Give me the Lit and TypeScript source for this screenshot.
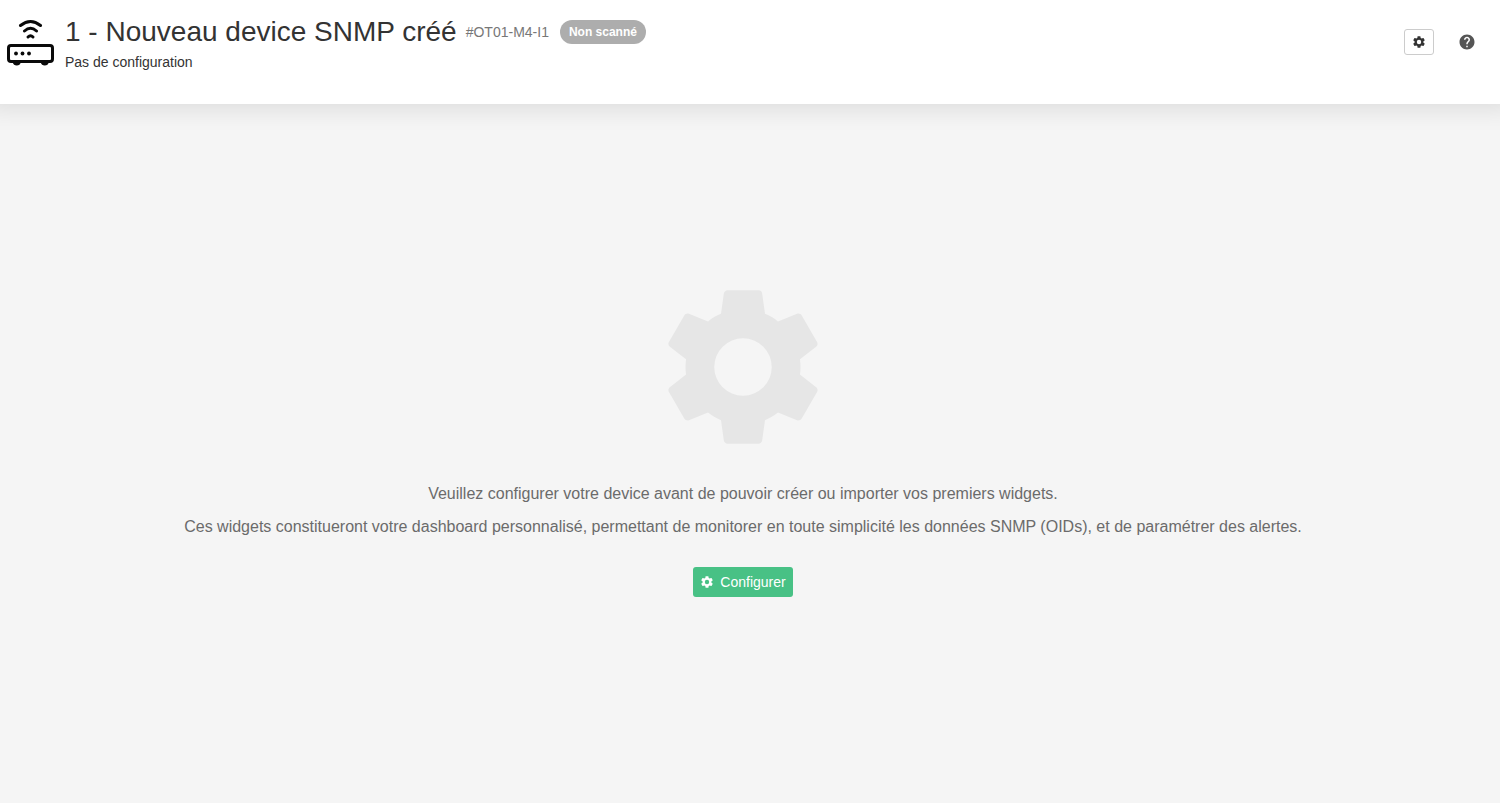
import { LitElement, css, html, svg } from "lit";
import { customElement, property } from "lit/decorators.js";

@customElement("gear-icon")
class GearIcon extends LitElement {
  static styles = css`
    :host { display: block; flex: none; }
    .glyph { display: block; width: 100%; height: 100%; fill: currentColor; }
  `;

  render() {
    return html`<svg class="glyph" viewBox="0 0 24 24" aria-hidden="true">
      <path d="M12 15.75a3.75 3.75 0 1 1 0-7.5a3.75 3.75 0 0 1 0 7.5m7.43-2.78c.04-.32.07-.64.07-.97s-.03-.66-.07-1l2.11-1.63c.19-.15.24-.42.12-.64l-2-3.46c-.12-.22-.39-.31-.61-.22l-2.49 1c-.52-.39-1.06-.73-1.69-.98l-.37-2.65A.506.506 0 0 0 14 2h-4c-.25 0-.46.18-.5.42l-.37 2.65c-.63.25-1.17.59-1.69.98l-2.49-1c-.22-.09-.49 0-.61.22l-2 3.46c-.13.22-.07.49.12.64L4.57 11c-.04.34-.07.67-.07 1s.03.65.07.97l-2.11 1.66c-.19.15-.25.42-.12.64l2 3.46c.12.22.39.3.61.22l2.49-1.01c.52.4 1.06.74 1.69.99l.37 2.65c.04.24.25.42.5.42h4c.25 0 .46-.18.5-.42l.37-2.65c.63-.26 1.17-.59 1.69-.99l2.49 1.01c.22.08.49 0 .61-.22l2-3.46c.12-.22.07-.49-.12-.64z"/>
    </svg>`;
  }
}

@customElement("device-header")
class DeviceHeader extends LitElement {
  @property() name = "";
  @property() reference = "";
  @property() status = "";
  @property() detail = "";

  static styles = css`
    :host {
      display: flex;
      align-items: flex-start;
      box-sizing: border-box;
      min-height: 104px;
      padding: 16px 24px 16px 6px;
      background: #fff;
      box-shadow: 0 -10px 24px 14px rgba(0, 0, 0, 0.11);
      color: #333;
    }
    .device { flex: none; width: 49px; height: 52px; margin-right: 10px; }
    .titles { flex: 1; min-width: 0; }
    .heading { display: flex; flex-wrap: wrap; align-items: center; min-height: 32px; }
    .name { margin: 0; font-size: 28px; line-height: 32px; font-weight: 400; }
    .reference { margin-left: 9px; font-size: 14px; line-height: 20px; color: #777; }
    .status {
      margin-left: 11px;
      padding: 0 9px;
      border-radius: 12px;
      background: #adadad;
      color: #fff;
      font-size: 12px;
      font-weight: 700;
      line-height: 24px;
    }
    .detail { margin: 4px 0 0; font-size: 14px; line-height: 20px; }
    .actions { display: flex; align-items: center; gap: 24px; padding-top: 13px; }
    .action {
      display: grid;
      place-items: center;
      box-sizing: border-box;
      width: 30px;
      height: 26px;
      padding: 0;
      border: 1px solid #ccc;
      border-radius: 3px;
      background: #fff;
      color: #333;
      cursor: pointer;
    }
    .gear { width: 14px; height: 14px; }
    .help { display: block; padding: 0; border: 0; background: none; color: #555; cursor: pointer; }
    .mark { display: block; width: 18px; height: 18px; fill: currentColor; }
  `;

  private deviceIcon() {
    return html`<svg class="device" viewBox="0 0 49 52" aria-hidden="true" fill="none" stroke="#0a0a0a">
      ${svg`
        <path stroke-width="3" stroke-linecap="round" d="M14.500 9.500Q24.500 1.500 34.500 9.500M18.500 15Q24.500 9.500 30.500 15"/>
        <path stroke-width="3" stroke-linecap="round" d="M22 21Q24.500 18.500 27 21"/>
        <rect x="2.500" y="29.500" width="44" height="16" rx="2.500" stroke-width="3"/>
        <g fill="#0a0a0a" stroke="none">
          <circle cx="10" cy="37.500" r="1.900"/><circle cx="16.500" cy="37.500" r="1.900"/><circle cx="23" cy="37.500" r="1.900"/>
          <path d="M6.500 46h8.500q-1 3.500-4.250 3.500T6.500 46M34.500 46h8.500q-1 3.500-4.250 3.500T34.500 46"/>
        </g>`}
    </svg>`;
  }

  render() {
    return html`
      ${this.deviceIcon()}
      <div class="titles">
        <div class="heading">
          <h1 class="name">${this.name}</h1>
          <span class="reference">${this.reference}</span>
          <span class="status">${this.status}</span>
        </div>
        <p class="detail">${this.detail}</p>
      </div>
      <div class="actions">
        <button class="action" type="button" aria-label="Paramètres"><gear-icon class="gear"></gear-icon></button>
        <button class="help" type="button" aria-label="Aide">
          <svg class="mark" viewBox="0 0 24 24" aria-hidden="true"><path d="M12 2C6.480 2 2 6.480 2 12s4.480 10 10 10 10-4.480 10-10S17.520 2 12 2zm1 17h-2v-2h2v2zm2.070-7.750l-.9.920C13.450 12.900 13 13.500 13 15h-2v-.5c0-1.100.45-2.100 1.170-2.830l1.240-1.260c.37-.36.59-.86.59-1.410 0-1.100-.9-2-2-2s-2 .9-2 2H8c0-2.210 1.790-4 4-4s4 1.790 4 4c0 .88-.36 1.680-.93 2.250z"/></svg>
        </button>
      </div>
    `;
  }
}

@customElement("app-root")
class AppRoot extends LitElement {
  static styles = css`
    :host {
      display: flex;
      flex-direction: column;
      min-height: 100vh;
      background: #f5f5f5;
      font-family: "Liberation Sans", Arial, sans-serif;
    }
    .empty {
      display: flex;
      flex-direction: column;
      align-items: center;
      padding: 171px 14px 32px 0;
      color: #6b6b6b;
      text-align: center;
    }
    .emblem { width: 184px; height: 184px; margin-bottom: 24px; color: #e6e6e6; }
    .message { margin: 0 0 11px; font-size: 16px; line-height: 22px; }
    .configure {
      display: flex;
      align-items: center;
      gap: 6px;
      height: 30px;
      margin-top: 18px;
      padding: 0 7px;
      border: 0;
      border-radius: 3px;
      background: #48c185;
      color: #fff;
      font-family: inherit;
      font-size: 14px;
      line-height: 20px;
      cursor: pointer;
    }
    .gear { width: 14px; height: 14px; }
  `;

  render() {
    return html`
      <device-header
        name="1 - Nouveau device SNMP créé"
        reference="#OT01-M4-I1"
        status="Non scanné"
        detail="Pas de configuration"
      ></device-header>
      <main class="empty">
        <gear-icon class="emblem"></gear-icon>
        <p class="message">Veuillez configurer votre device avant de pouvoir créer ou importer vos premiers widgets.</p>
        <p class="message">Ces widgets constitueront votre dashboard personnalisé, permettant de monitorer en toute simplicité les données SNMP (OIDs), et de paramétrer des alertes.</p>
        <button class="configure" type="button"><gear-icon class="gear"></gear-icon>Configurer</button>
      </main>
    `;
  }
}
